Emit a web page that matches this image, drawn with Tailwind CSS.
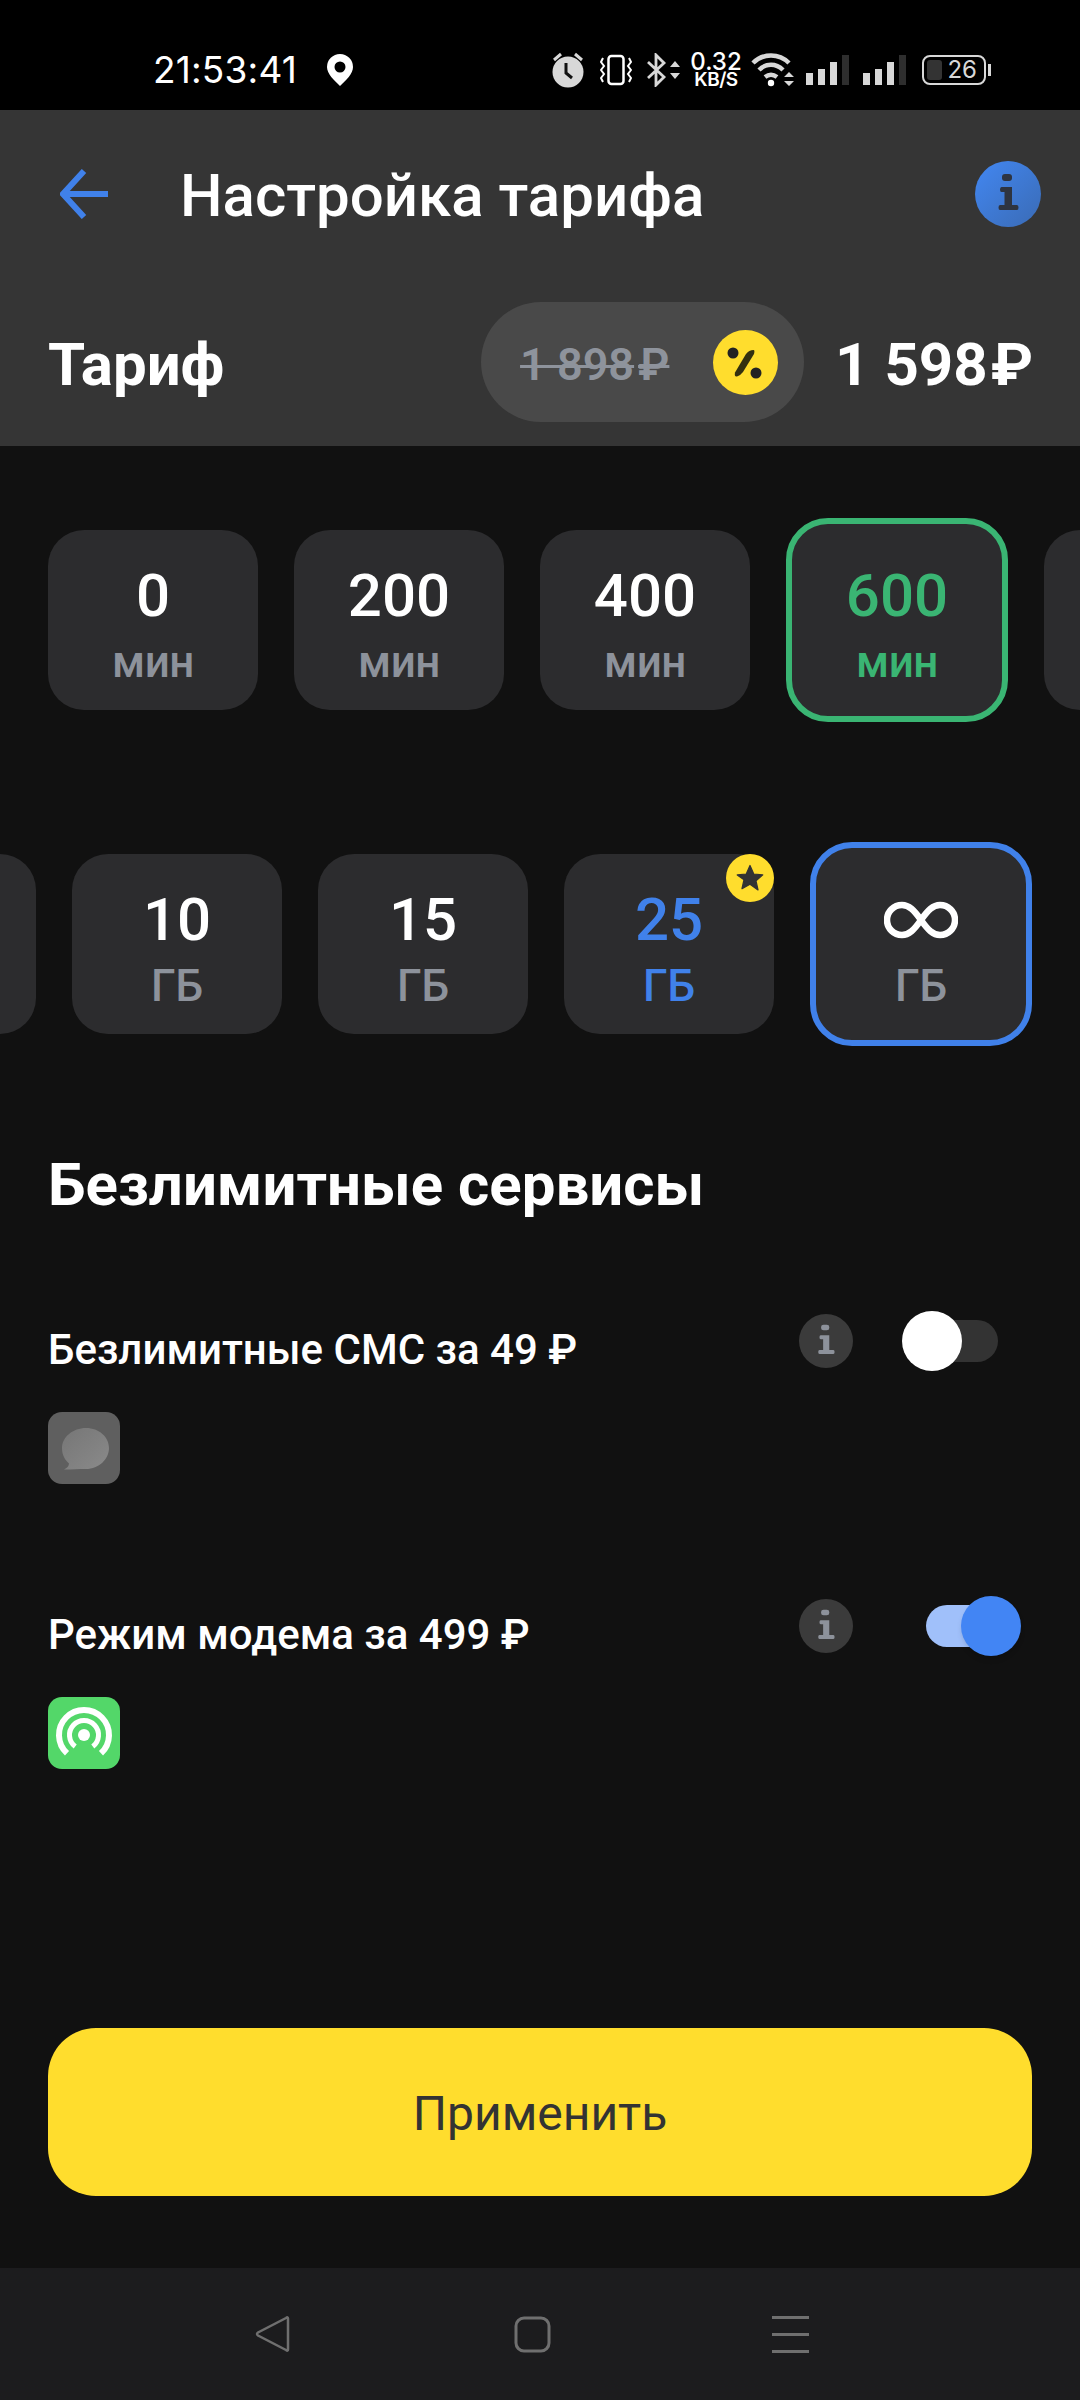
<!DOCTYPE html>
<html lang="ru">
<head>
    <meta charset="UTF-8">
    <meta name="viewport" content="width=device-width, initial-scale=1.0">
    <title>Настройка тарифа</title>
    <script src="https://cdn.jsdelivr.net/npm/@tailwindcss/browser@4"></script>
</head>
<body class="bg-[#111111] font-['Roboto',sans-serif] text-white">
<div class="w-[1080px] h-[2400px] flex flex-col overflow-hidden">

    <!-- status bar -->
    <div class="h-[110px] bg-black flex items-center pt-[30px] pl-[153px] pr-[94px] shrink-0">
        <span class="text-[37px] leading-[40px] tracking-[0.2px] font-['Inter',sans-serif] text-white">21:53:41</span>
        <svg class="ml-[30px] w-[26px] h-[32px]" viewBox="0 0 26 32"><path fill-rule="evenodd" fill="#fff" d="M13 0a13 13 0 0 1 13 13c0 7-7 13-13 19C7 26 0 20 0 13A13 13 0 0 1 13 0zm0 7.500a5.500 5.500 0 1 0 0 11 5.500 5.500 0 0 0 0-11z"/></svg>
        <div class="ml-auto flex items-center">
            <svg class="w-[34px] h-[36px]" viewBox="0 0 34 36"><circle cx="17" cy="20" r="15.500" fill="#d8d8d8"/><path d="M15 11v10l6 5" stroke="#111" stroke-width="3" fill="none"/><path d="M3 8l7-6M31 8l-7-6" stroke="#d8d8d8" stroke-width="3"/></svg>
            <svg class="ml-[15px] w-[32px] h-[32px]" viewBox="0 0 32 32"><rect x="8.500" y="2" width="15" height="28" rx="3" fill="none" stroke="#fff" stroke-width="2.500"/><path d="M3 4l-2 4 3 4-3 4 3 4-3 4 2 4M29 4l2 4-3 4 3 4-3 4 3 4-2 4" fill="none" stroke="#fff" stroke-width="2"/></svg>
            <svg class="ml-[15px] w-[34px] h-[34px]" viewBox="0 0 34 34"><path d="M1 9l16 15-8 8V2l8 8L1 25" fill="none" stroke="#d8d8d8" stroke-width="2.800"/><path d="M23 14l5-6 5 6zM23 20l5 6 5-6z" fill="#d8d8d8"/></svg>
            <div class="ml-[9px] w-[52px] flex flex-col items-center">
                <span class="text-[24px] leading-[20px] font-medium font-['Inter',sans-serif]">0.32</span>
                <span class="text-[19px] leading-[16px] font-semibold tracking-[-0.5px] font-['Inter',sans-serif]">KB/S</span>
            </div>
            <svg class="ml-[9px] w-[44px] h-[34px]" viewBox="0 0 44 34"><path d="M2 10C12 0 28 0 38 10M8 17c7-7 17-7 24 0M14 24c4-3 8-3 12 0" fill="none" stroke="#d8d8d8" stroke-width="4.500"/><circle cx="20" cy="30" r="3.200" fill="#fff"/><path d="M33 24l5-5 5 5zM33 28l5 5 5-5z" fill="#d8d8d8"/></svg>
            <svg class="ml-[11px] w-[44px] h-[30px]" viewBox="0 0 44 30"><rect x="0" y="18" width="7" height="12" fill="#d8d8d8"/><rect x="12" y="14" width="7" height="16" fill="#d8d8d8"/><rect x="24" y="7" width="7" height="23" fill="#d8d8d8"/><rect x="36" y="0" width="7" height="30" fill="#2e2e2e"/></svg>
            <svg class="ml-[13px] w-[44px] h-[30px]" viewBox="0 0 44 30"><rect x="0" y="18" width="7" height="12" fill="#d8d8d8"/><rect x="12" y="14" width="7" height="16" fill="#d8d8d8"/><rect x="24" y="7" width="7" height="23" fill="#d8d8d8"/><rect x="36" y="0" width="7" height="30" fill="#2e2e2e"/></svg>
            <div class="ml-[15px] relative w-[64px] h-[30px] rounded-[8px] border-2 border-[#d8d8d8] flex items-center justify-end pr-[7px]">
                <div class="absolute left-[3px] top-[3px] w-[15px] h-[20px] rounded-[3px] bg-[#333333]"></div>
                <span class="relative text-[24px] leading-[24px] text-[#d8d8d8] font-['Inter',sans-serif]">26</span>
                <div class="absolute right-[-7px] top-[7px] w-[3px] h-[12px] bg-[#d8d8d8]"></div>
            </div>
        </div>
    </div>

    <!-- header -->
    <div class="bg-[#353535] shrink-0">
        <div class="h-[168px] flex items-center pl-[60px] pr-[39px]">
            <svg class="w-[48px] h-[50px]" viewBox="0 0 48 50"><path d="M24 2L3 25l21 23M3 25h45" fill="none" stroke="#4081ea" stroke-width="6"/></svg>
            <h1 class="ml-[72px] text-[60px] leading-[60px] font-medium pt-[3px]">Настройка тарифа</h1>
            <div class="ml-auto w-[66px] h-[66px] rounded-full bg-gradient-to-br from-[#4287f2] to-[#3a6bb5]">
                <svg class="w-[66px] h-[66px]" viewBox="0 0 66 66"><rect x="27" y="13" width="10" height="7" rx="3" fill="#2e3440"/><path d="M26.500 26h10.500v18h5q1.500 0 1.500 2.500t-1.500 2.500H25q-1.500 0-1.500-2.500T25 44h4.500V31h-3q-1.500 0-1.500-2.500t1.500-2.500z" fill="#2e3440"/></svg>
            </div>
        </div>
        <div class="h-[168px] flex items-center pl-[48px] pr-[47px]">
            <span class="pt-[5px] text-[60px] leading-[60px] font-bold">Тариф</span>
            <div class="ml-auto w-[323px] h-[120px] rounded-full bg-[#494949] flex items-center pl-[39px] pr-[26px] justify-between">
                <span class="pt-[4px] text-[45px] leading-[45px] font-semibold text-[#8e939c] line-through decoration-[3px]">1 898<span class="ml-[4px]">₽</span></span>
                <div class="w-[65px] h-[65px] rounded-full bg-[#ffdd2d]">
                    <svg class="w-[65px] h-[65px]" viewBox="0 0 65 65"><circle cx="20" cy="23" r="5.500" fill="#222"/><circle cx="43" cy="43" r="5.500" fill="#222"/><path d="M40.500 20Q36 20 33 24L22 42.500Q21 47 24 46.500 27 46 30 42L41 24Q42 20 40.500 20z" fill="#33300f"/></svg>
                </div>
            </div>
            <span class="pt-[5px] ml-[31px] text-[60px] leading-[60px] font-bold">1 598<span class="ml-[3px]">₽</span></span>
        </div>
    </div>

    <main class="flex-1 flex flex-col">
        <!-- minutes -->
        <div class="mt-[72px] h-[204px] flex items-center gap-[36px] pl-[48px] overflow-hidden shrink-0">
            <div class="w-[210px] h-[180px] shrink-0 rounded-[36px] bg-[#2c2c2e] flex flex-col items-center pt-[36px]">
                <span class="text-[60px] leading-[60px] font-medium">0</span>
                <span class="mt-[14px] text-[44px] leading-[45px] tracking-[-0.5px] font-medium text-[#8d929b]">мин</span>
            </div>
            <div class="w-[210px] h-[180px] shrink-0 rounded-[36px] bg-[#2c2c2e] flex flex-col items-center pt-[36px]">
                <span class="text-[60px] leading-[60px] font-medium">200</span>
                <span class="mt-[14px] text-[44px] leading-[45px] tracking-[-0.5px] font-medium text-[#8d929b]">мин</span>
            </div>
            <div class="w-[210px] h-[180px] shrink-0 rounded-[36px] bg-[#2c2c2e] flex flex-col items-center pt-[36px]">
                <span class="text-[60px] leading-[60px] font-medium">400</span>
                <span class="mt-[14px] text-[44px] leading-[45px] tracking-[-0.5px] font-medium text-[#8d929b]">мин</span>
            </div>
            <div class="w-[222px] h-[204px] shrink-0 rounded-[42px] bg-[#2c2c2e] border-[6px] border-[#3ab573] flex flex-col items-center pt-[42px]">
                <span class="text-[60px] leading-[60px] font-medium text-[#3ab573]">600</span>
                <span class="mt-[14px] text-[44px] leading-[45px] tracking-[-0.5px] font-medium text-[#3ab573]">мин</span>
            </div>
            <div class="w-[210px] h-[180px] shrink-0 rounded-[36px] bg-[#2c2c2e]"></div>
        </div>

        <!-- gigabytes -->
        <div class="mt-[120px] h-[204px] flex items-center gap-[36px] ml-[-174px] shrink-0">
            <div class="w-[210px] h-[180px] shrink-0 rounded-[36px] bg-[#2c2c2e]"></div>
            <div class="w-[210px] h-[180px] shrink-0 rounded-[36px] bg-[#2c2c2e] flex flex-col items-center pt-[36px]">
                <span class="text-[60px] leading-[60px] font-medium">10</span>
                <span class="mt-[14px] text-[44px] leading-[45px] font-medium text-[#8d929b]">ГБ</span>
            </div>
            <div class="w-[210px] h-[180px] shrink-0 rounded-[36px] bg-[#2c2c2e] flex flex-col items-center pt-[36px]">
                <span class="text-[60px] leading-[60px] font-medium">15</span>
                <span class="mt-[14px] text-[44px] leading-[45px] font-medium text-[#8d929b]">ГБ</span>
            </div>
            <div class="relative w-[210px] h-[180px] shrink-0 rounded-[36px] bg-[#2c2c2e] flex flex-col items-center pt-[36px]">
                <span class="text-[60px] leading-[60px] font-medium text-[#4081ea]">25</span>
                <span class="mt-[14px] text-[44px] leading-[45px] font-medium text-[#4081ea]">ГБ</span>
                <div class="absolute right-0 top-0 w-[48px] h-[48px] rounded-full bg-[#ffdd2d] flex items-center justify-center">
                    <svg class="w-[30px] h-[30px]" viewBox="0 0 24 24"><path d="M12 2l3 6.800 7.200.7-5.400 4.800 1.600 7.200L12 17l-6.400 3.500 1.600-7.200L1.800 9.500 9 8.800z" fill="#333" stroke="#333" stroke-linejoin="round"/></svg>
                </div>
            </div>
            <div class="w-[222px] h-[204px] shrink-0 rounded-[42px] bg-[#2c2c2e] border-[6px] border-[#4081ea] flex flex-col items-center pt-[42px]">
                <svg class="w-[74px] h-[60px]" viewBox="0 0 74 60"><path d="M37 30C30 20 25 15 18 15a15 15 0 0 0 0 30c7 0 12-5 19-15s12-15 19-15a15 15 0 0 1 0 30c-7 0-12-5-19-15z" fill="none" stroke="#fff" stroke-width="6.500"/></svg>
                <span class="mt-[14px] text-[44px] leading-[45px] font-medium text-[#8d929b]">ГБ</span>
            </div>
        </div>

        <!-- services -->
        <h2 class="mt-[109px] pl-[48px] text-[60px] leading-[60px] font-bold">Безлимитные сервисы</h2>

        <div class="mt-[96px] pl-[48px] pr-[82px]">
            <div class="flex items-start justify-between">
                <span class="mt-[18px] text-[42px] leading-[42px] font-medium">Безлимитные СМС за 49 ₽</span>
                <div class="h-[60px] flex items-center gap-[73px]">
                    <div class="w-[54px] h-[54px] rounded-full bg-[#3b3b3b]">
                        <svg class="w-[54px] h-[54px]" viewBox="0 0 66 66"><rect x="27" y="13" width="10" height="7" rx="3" fill="#8d929b"/><path d="M26.500 26h10.500v18h5q1.500 0 1.500 2.500t-1.500 2.500H25q-1.500 0-1.500-2.500T25 44h4.500V31h-3q-1.500 0-1.500-2.500t1.500-2.500z" fill="#8d929b"/></svg>
                    </div>
                    <div class="relative w-[72px] h-[42px] rounded-full bg-[#333333]">
                        <div class="absolute left-[-24px] top-[-9px] w-[60px] h-[60px] rounded-full bg-white"></div>
                    </div>
                </div>
            </div>
            <div class="mt-[41px] w-[72px] h-[72px] rounded-[14px] bg-[#5f5f5f]">
                <svg class="w-[72px] h-[72px]" viewBox="0 0 72 72"><defs><linearGradient id="bubble" x1="0" y1="0" x2="1" y2="1"><stop offset="0" stop-color="#767676"/><stop offset="1" stop-color="#8a8a8a"/></linearGradient></defs><path d="M38 16c13 0 23 9 23 20s-10 21-23 21c-7 0-14 .5-22 .5 3-1.500 5-3.500 5-6C17 48 14 43 14 36c0-11 11-20 24-20z" fill="url(#bubble)"/></svg>
            </div>
        </div>

        <div class="mt-[112px] pl-[48px] pr-[82px]">
            <div class="flex items-start justify-between">
                <span class="mt-[18px] text-[42px] leading-[42px] font-medium">Режим модема за 499 ₽</span>
                <div class="h-[60px] flex items-center gap-[73px]">
                    <div class="w-[54px] h-[54px] rounded-full bg-[#3b3b3b]">
                        <svg class="w-[54px] h-[54px]" viewBox="0 0 66 66"><rect x="27" y="13" width="10" height="7" rx="3" fill="#8d929b"/><path d="M26.500 26h10.500v18h5q1.500 0 1.500 2.500t-1.500 2.500H25q-1.500 0-1.500-2.500T25 44h4.500V31h-3q-1.500 0-1.500-2.500t1.500-2.500z" fill="#8d929b"/></svg>
                    </div>
                    <div class="relative w-[72px] h-[42px] rounded-full bg-[#a0c0fa]">
                        <div class="absolute right-[-23px] top-[-9px] w-[60px] h-[60px] rounded-full bg-[#4285f4] shadow-md"></div>
                    </div>
                </div>
            </div>
            <div class="mt-[41px] w-[72px] h-[72px] rounded-[14px] bg-[#53d769]">
                <svg class="w-[72px] h-[72px]" viewBox="0 0 72 72"><path d="M19 56.300A25 25 0 1 1 53 56.300" fill="none" stroke="#fff" stroke-width="6"/><path d="M27.200 49.500A14.500 14.500 0 1 1 44.800 49.500" fill="none" stroke="#fff" stroke-width="5"/><circle cx="36" cy="38" r="6" fill="#fff"/></svg>
            </div>
        </div>

        <!-- apply -->
        <div class="mt-auto mb-[72px] mx-[48px] h-[168px] rounded-[48px] bg-[#ffdd2d] flex items-center justify-center">
            <span class="pt-[3px] text-[48px] leading-[48px] text-[#333333]">Применить</span>
        </div>
    </main>

    <!-- nav bar -->
    <div class="h-[132px] bg-[#1c1c1e] shrink-0 flex items-start pt-[48px] pl-[255px]">
        <svg class="w-[36px] h-[36px]" viewBox="0 0 36 36"><path d="M33 2.500v31q0 2-2 .5L3 19.500q-2-1.500 0-3L31 2q2-1.500 2 .5z" fill="none" stroke="#6f6f6f" stroke-width="2.500"/></svg>
        <svg class="ml-[223px] w-[37px] h-[37px]" viewBox="0 0 37 37"><rect x="2" y="2" width="33" height="33" rx="8" fill="none" stroke="#6f6f6f" stroke-width="3"/></svg>
        <svg class="ml-[221px] w-[37px] h-[37px]" viewBox="0 0 37 37"><path d="M0 1.500h37M0 18.500h37M0 35.500h37" stroke="#6f6f6f" stroke-width="3"/></svg>
    </div>
</div>
</body>
</html>
